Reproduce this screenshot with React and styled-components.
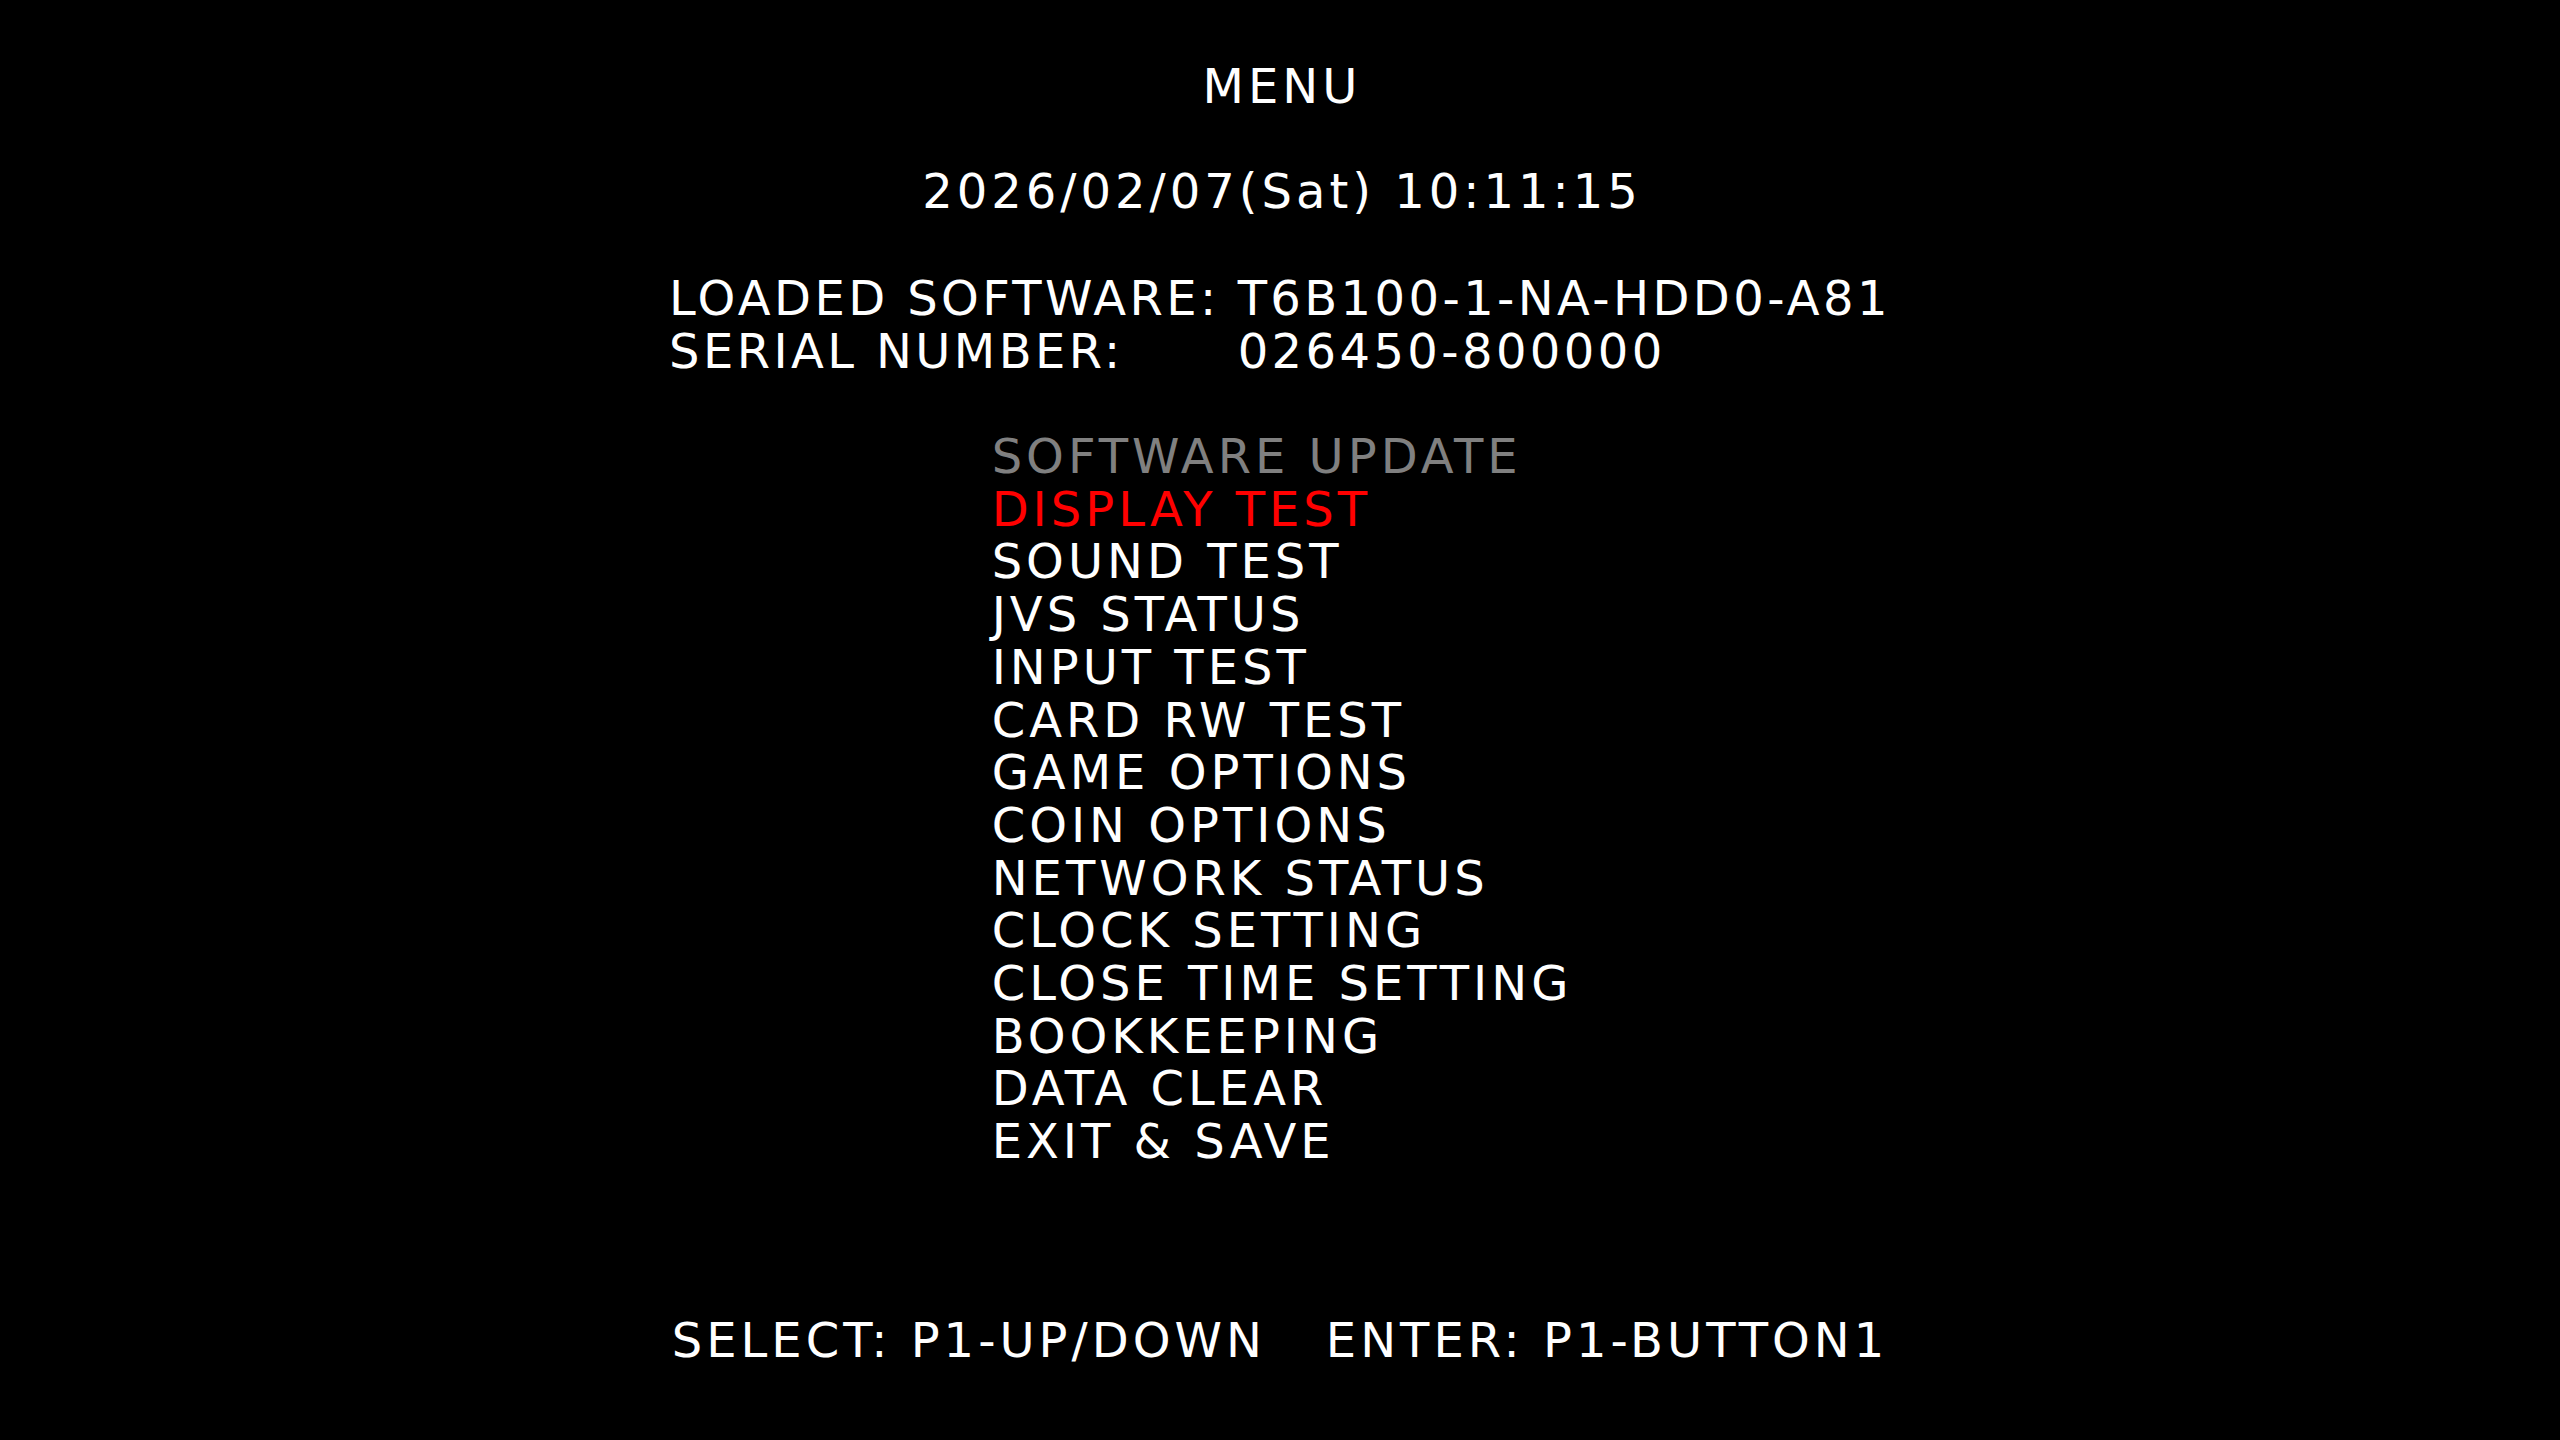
import React from 'react'
import styled, { createGlobalStyle } from 'styled-components'

const GlobalStyle = createGlobalStyle`
  html, body {
    margin: 0;
    padding: 0;
    background: #000;
  }
  body {
    font-family: "DejaVu Sans", "Liberation Sans", sans-serif;
  }
`

const menuItems = [
  { label: 'SOFTWARE UPDATE', state: 'disabled' },
  { label: 'DISPLAY TEST', state: 'selected' },
  { label: 'SOUND TEST' },
  { label: 'JVS STATUS' },
  { label: 'INPUT TEST' },
  { label: 'CARD RW TEST' },
  { label: 'GAME OPTIONS' },
  { label: 'COIN OPTIONS' },
  { label: 'NETWORK STATUS' },
  { label: 'CLOCK SETTING' },
  { label: 'CLOSE TIME SETTING' },
  { label: 'BOOKKEEPING' },
  { label: 'DATA CLEAR' },
  { label: 'EXIT & SAVE' },
]

const info = [
  { label: 'LOADED SOFTWARE:', value: 'T6B100-1-NA-HDD0-A81' },
  { label: 'SERIAL NUMBER:', value: '026450-800000' },
]

export default function App() {
  return (
    <>
      <GlobalStyle />
      <Screen>
        <Title>MENU</Title>
        <Clock>2026/02/07(Sat) 10:11:15</Clock>
        <InfoTable>
          {info.map((row) => (
            <React.Fragment key={row.label}>
              <Line>{row.label}</Line>
              <Line>{row.value}</Line>
            </React.Fragment>
          ))}
        </InfoTable>
        <MenuList>
          {menuItems.map((item) => (
            <MenuItem key={item.label} $state={item.state}>
              {item.label}
            </MenuItem>
          ))}
        </MenuList>
        <Footer>
          <Line>SELECT: P1-UP/DOWN</Line>
          <Line>ENTER: P1-BUTTON1</Line>
        </Footer>
      </Screen>
    </>
  )
}

const Screen = styled.div`
  width: 2560px;
  height: 1440px;
  box-sizing: border-box;
  padding-top: 60px;
  background: #000;
  color: #fff;
  display: flex;
  flex-direction: column;
  align-items: center;
  font-size: 48px;
  letter-spacing: 4px;
  line-height: 53px;
  white-space: nowrap;
`
const Line = styled.div``

const Title = styled.div`
  padding-left: 4px;
`
const Clock = styled.div`
  margin-top: 52px;
  padding-left: 4px;
`
const InfoTable = styled.div`
  margin-top: 54px;
  display: grid;
  grid-template-columns: auto auto;
  column-gap: 18px;
  letter-spacing: 3.4px;
`
const MenuList = styled.div`
  margin-top: 52px;
  display: flex;
  flex-direction: column;
  padding-left: 4px;
`
const MenuItem = styled.div`
  line-height: 52.7px;
  color: ${(p) =>
    p.$state === 'disabled' ? '#808080' : p.$state === 'selected' ? '#ff0000' : '#ffffff'};
`
const Footer = styled.div`
  margin-top: 146px;
  display: flex;
  gap: 60px;
`
